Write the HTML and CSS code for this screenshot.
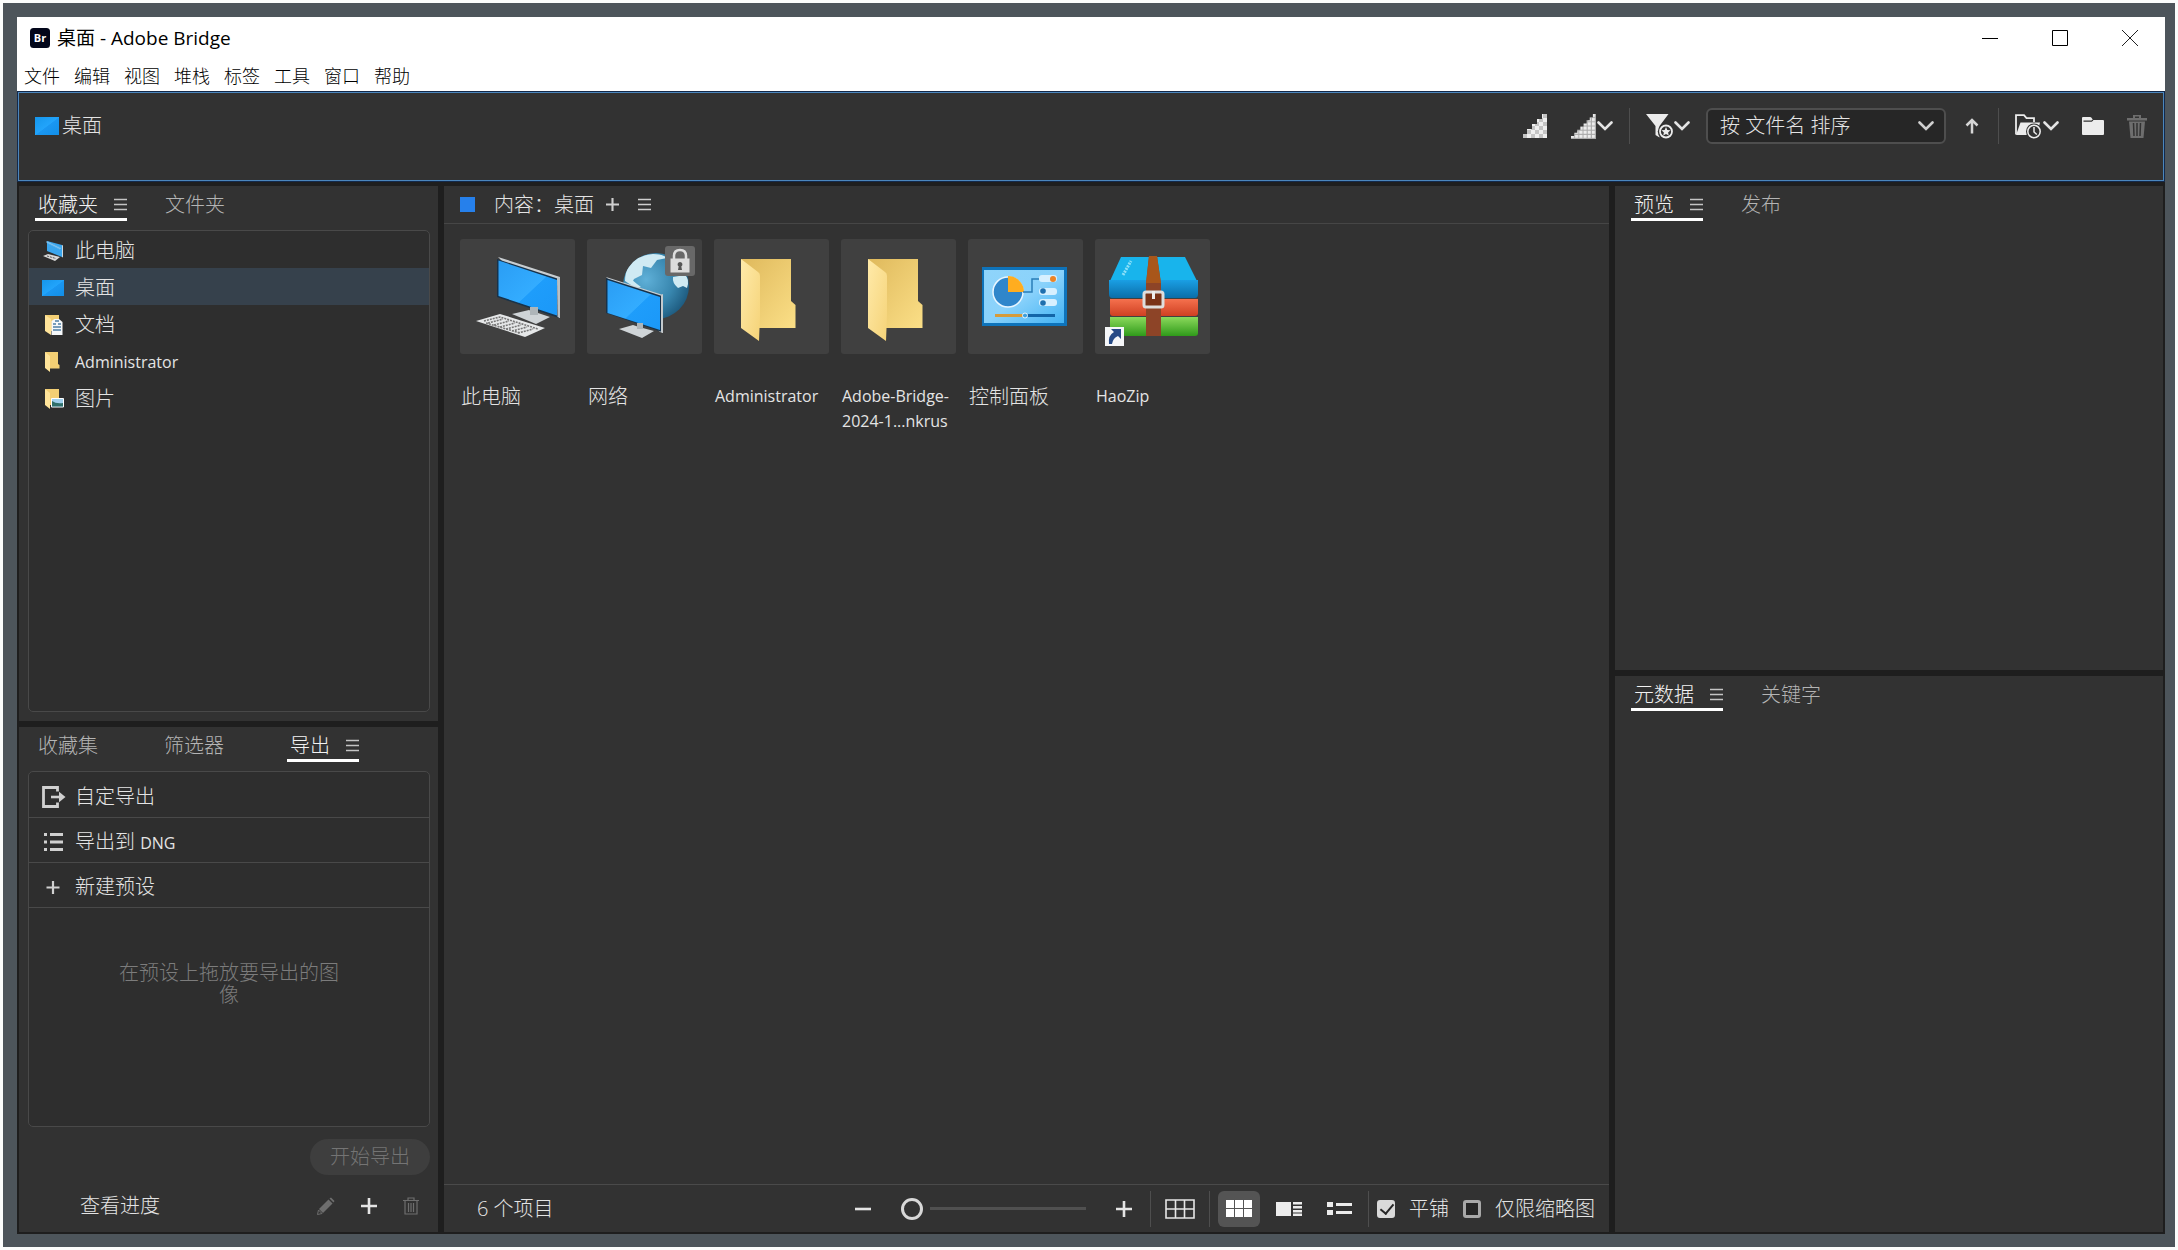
FILE: index.html
```html
<!DOCTYPE html>
<html lang="zh-CN">
<head>
<meta charset="utf-8">
<title>桌面 - Adobe Bridge</title>
<link rel="stylesheet" href="styles.css">
</head>
<body>
<svg class="defs" aria-hidden="true">
  <defs>
    <linearGradient id="g-screen" x1="0" y1="0" x2="1" y2="1"><stop offset="0" stop-color="#2a9df4"/><stop offset="0.55" stop-color="#33acff"/><stop offset="0.56" stop-color="#1e9dfb"/><stop offset="1" stop-color="#1b98f8"/></linearGradient>
    <linearGradient id="g-desk" x1="0" y1="0" x2="1" y2="1"><stop offset="0" stop-color="#1596ec"/><stop offset="0.5" stop-color="#22a4fb"/><stop offset="0.52" stop-color="#1a97f2"/><stop offset="1" stop-color="#128fe8"/></linearGradient>
    <linearGradient id="g-back" x1="0" y1="0" x2="1" y2="1"><stop offset="0" stop-color="#dfb95c"/><stop offset="1" stop-color="#fbdf87"/></linearGradient>
    <linearGradient id="g-flap" x1="0" y1="0" x2="1" y2="1"><stop offset="0" stop-color="#ffeaa9"/><stop offset="1" stop-color="#f5d378"/></linearGradient>
    <radialGradient id="g-globe" cx="0.35" cy="0.4" r="0.7"><stop offset="0" stop-color="#5fb0d8"/><stop offset="0.6" stop-color="#3886ae"/><stop offset="1" stop-color="#1c587c"/></radialGradient>
    <linearGradient id="g-panel" x1="0" y1="0" x2="1" y2="1"><stop offset="0" stop-color="#8fd4fa"/><stop offset="0.5" stop-color="#8ad2fb"/><stop offset="1" stop-color="#43b3f4"/></linearGradient>
    <linearGradient id="g-blue" x1="0" y1="0" x2="0" y2="1"><stop offset="0" stop-color="#1a9fe4"/><stop offset="1" stop-color="#0b6ea8"/></linearGradient>
    <linearGradient id="g-red" x1="0" y1="0" x2="0" y2="1"><stop offset="0" stop-color="#f5714e"/><stop offset="1" stop-color="#cf4022"/></linearGradient>
    <linearGradient id="g-green" x1="0" y1="0" x2="0" y2="1"><stop offset="0" stop-color="#8bd95c"/><stop offset="1" stop-color="#2f9a1a"/></linearGradient>
    <pattern id="p-check" width="8" height="8" patternUnits="userSpaceOnUse"><rect width="8" height="8" fill="#c4c4c4"/><path d="M0 0h4v4H0zM4 4h4v4H4z" fill="#efefef"/></pattern>
    <pattern id="p-check-fine" width="4" height="4" patternUnits="userSpaceOnUse"><rect width="4" height="4" fill="#a8a8a8"/><path d="M0 0h3v3H0z" fill="#ececec"/></pattern>
  </defs>
  <symbol id="i-desktop" viewBox="0 0 24 18"><path d="M0 0h24v18H0z" fill="url(#g-desk)"/></symbol>
  <symbol id="i-menu" viewBox="0 0 13 13"><path d="M0 1.500h13M0 6.500h13M0 11.500h13" stroke="currentColor" stroke-width="1.500"/></symbol>
  <symbol id="i-plus" viewBox="0 0 16 16"><path d="M8 0v16M0 8h16" stroke="currentColor" stroke-width="2.600"/></symbol>
  <symbol id="i-chevron" viewBox="0 0 16 10"><path d="M1.500 1.500L8 8l6.500-6.500" fill="none" stroke="currentColor" stroke-width="2.600" stroke-linecap="round"/></symbol>
  <symbol id="i-folder" viewBox="0 0 56 84"><path d="M1 1h50v42l4.500 4V70H17z" fill="url(#g-back)"/><path d="M1 1l17 13q2 1 2 4v40l-1 25L1 70z" fill="url(#g-flap)"/></symbol>
  <symbol id="i-trash" viewBox="0 0 20 23"><path d="M0 3h20v2.500H0zM6 0h8v3h-2V1.500H8V3H6z" fill="currentColor"/><path d="M2 6.500h16L16.500 23h-13z" fill="currentColor"/><path d="M6.500 8l.5 13M10 8v13M13.500 8L13 21" stroke="#323232" stroke-width="1.500"/></symbol>
</svg>

<div class="window">
  <header class="titlebar">
    <svg class="app-icon" viewBox="0 0 20 20"><rect width="20" height="20" rx="3.500" fill="#02061a"/><text x="10" y="13.500" text-anchor="middle" class="app-icon-text">Br</text></svg>
    <h1 class="title">桌面 - Adobe Bridge</h1>
    <div class="window-buttons">
      <button aria-label="最小化"><svg width="16" height="16"><path d="M0 8.500h16" stroke="#000"/></svg></button>
      <button aria-label="最大化"><svg width="16" height="16"><path d="M.5.5h15v15H.5z" fill="none" stroke="#000"/></svg></button>
      <button aria-label="关闭"><svg width="16" height="16"><path d="M0 0l16 16M16 0L0 16" stroke="#222"/></svg></button>
    </div>
  </header>
  <nav class="menubar">
    <button>文件</button><button>编辑</button><button>视图</button><button>堆栈</button><button>标签</button><button>工具</button><button>窗口</button><button>帮助</button>
  </nav>

  <section class="pathbar">
    <a class="crumb" href="#desktop"><svg width="24" height="18"><use href="#i-desktop"/></svg>桌面</a>
    <div class="tools">
      <button class="tool tool-first" aria-label="缩览图品质"><svg width="24" height="24" viewBox="0 0 24 24"><path d="M0 24v-4h4v-5h5v-5h5V5h5V0h5v24z" fill="url(#p-check)"/></svg></button>
      <button class="tool" aria-label="预览品质"><svg width="25" height="25" viewBox="0 0 24 24"><path d="M0 24v-3h3v-3h3v-3h3v-3h3V9h3V6h3V3h3V0h3v24z" fill="url(#p-check-fine)"/></svg><svg class="chev" width="16" height="10"><use href="#i-chevron"/></svg></button>
      <span class="divider"></span>
      <button class="tool" aria-label="过滤"><svg width="27" height="26" viewBox="0 0 27 26"><path d="M0 1h22.500L13.500 13v11.500l-4-2.500v-9z" fill="#ececec"/><circle cx="20" cy="18.500" r="8.200" fill="#323232"/><circle cx="20" cy="18.500" r="6" fill="#323232" stroke="#ececec" stroke-width="1.800"/><path d="M20 14l1.300 3 3.200.3-2.400 2.100.7 3.200-2.800-1.700-2.800 1.700.7-3.200-2.400-2.100 3.200-.3z" fill="#ececec"/></svg><svg class="chev" width="16" height="10"><use href="#i-chevron"/></svg></button>
      <div class="sort">
        <select aria-label="排序方式"><option>按 文件名 排序</option></select>
        <svg class="sort-chev" width="16" height="10"><use href="#i-chevron"/></svg>
      </div>
      <button class="tool tool-arrow" aria-label="升序"><svg width="16" height="16" viewBox="0 0 16 16"><path d="M8 15.500V3M2.500 7.500L8 2l5.500 5.500" fill="none" stroke="currentColor" stroke-width="2.500"/></svg></button>
      <span class="divider"></span>
      <button class="tool" aria-label="最近使用的文件夹"><svg width="27" height="25" viewBox="0 0 27 25"><path d="M1 20.500V1.200h8l2.500 3H19V8" fill="none" stroke="#ececec" stroke-width="1.800"/><path d="M1 21L5.500 8.500H25L22 21z" fill="#ececec"/><circle cx="19" cy="17.500" r="8" fill="#323232"/><circle cx="19" cy="17.500" r="6.200" fill="#323232" stroke="#ececec" stroke-width="1.500"/><path d="M19 13v5l2.800 2.500" fill="none" stroke="#ececec" stroke-width="1.500"/></svg><svg class="chev" width="16" height="10"><use href="#i-chevron"/></svg></button>
      <button class="tool tool-folder" aria-label="新建文件夹"><svg width="22" height="18" viewBox="0 0 22 18"><path d="M0 1q0-1 1-1h7q1 0 1.500.8L11 3h10q1 0 1 1v13q0 1-1 1H1q-1 0-1-1z" fill="#ececec"/><path d="M1.500 4.200h8L11 3" fill="none" stroke="#323232" stroke-width="1.200"/></svg></button>
      <button class="tool tool-off" aria-label="删除" disabled><svg width="20" height="23"><use href="#i-trash"/></svg></button>
    </div>
  </section>

  <main class="workspace">
    <div class="column column-left">
      <section class="panel">
        <div class="tabs">
          <button class="tab active">收藏夹<svg width="13" height="13"><use href="#i-menu"/></svg></button>
          <button class="tab">文件夹</button>
        </div>
        <ul class="box favorites">
          <li><a href="#pc"><svg width="22" height="22" viewBox="0 0 22 22"><path d="M5 1l15 4v12L5 11z" fill="#3aa6ee"/><path d="M20 5l1 .5V17l-1 .5z" fill="#cfd6da"/><path d="M5 1v2l2-1v2l2-1v2l2-1v2l2-1v2l2-1v2l2-1v2l2-1" fill="none" stroke="#8fc9ee" stroke-width=".8"/><path d="M1 16l5-2 12 3-5 4z" fill="#d9d9d9"/><path d="M5 16l9 2.500" stroke="#555" stroke-dasharray="2 1"/></svg>此电脑</a></li>
          <li class="selected"><a href="#desktop"><svg width="22" height="16" viewBox="0 0 24 18" preserveAspectRatio="none"><path d="M0 0h24v18H0z" fill="url(#g-desk)"/></svg>桌面</a></li>
          <li><a href="#docs"><svg width="22" height="22" viewBox="0 0 22 22"><path d="M3 1h14v16H7z" fill="#f3cf74"/><path d="M3 1l6 4v16l-6-4z" fill="#ffe49a"/><path d="M9.500 7l3-2H17l3.500 3v13h-11z" fill="#f5f8fa"/><path d="M13 7h4M11 10h3M16 10h3M11 13h8M11 16h8" stroke="#4d7fa6" stroke-width="1.300"/></svg>文档</a></li>
          <li><a href="#admin"><svg width="22" height="22" viewBox="0 0 22 22"><path d="M3 1h13v12l1.500 1v3.500H7z" fill="#f3cf74"/><path d="M3 1l5 4v16l-5-4z" fill="#ffe49a"/></svg><span class="latin">Administrator</span></a></li>
          <li><a href="#pics"><svg width="22" height="22" viewBox="0 0 22 22"><path d="M3 1h14v16H7z" fill="#f3cf74"/><path d="M3 1l5 4v16l-5-4z" fill="#ffe49a"/><path d="M9.500 10.500h12v8.500h-12z" fill="#9fd0ee" stroke="#fff"/><path d="M10 13q4 3 11 2v3.500H10z" fill="#2e6f6a"/></svg>图片</a></li>
        </ul>
      </section>
      <section class="panel">
        <div class="tabs">
          <button class="tab">收藏集</button>
          <button class="tab">筛选器</button>
          <button class="tab active">导出<svg width="13" height="13"><use href="#i-menu"/></svg></button>
        </div>
        <div class="box">
          <ul class="presets">
            <li><svg width="24" height="22" viewBox="0 0 24 22"><path d="M15.500 5.500V1.500H1.500v19h14v-4" fill="none" stroke="currentColor" stroke-width="2.800"/><path d="M9 11h9" stroke="currentColor" stroke-width="2.600"/><path d="M17 5.800L23.500 11 17 16.200z" fill="currentColor"/></svg>自定导出</li>
            <li><svg width="24" height="22" viewBox="0 0 24 22"><path d="M2 3.500h3M2 11h3M2 18.500h3M8 3.500h13M8 11h13M8 18.500h13" stroke="currentColor" stroke-width="2.800"/></svg><span>导出到 <span class="latin">DNG</span></span></li>
            <li><svg width="24" height="22" viewBox="0 0 24 22"><path d="M11 5v13M4.500 11.500h13" stroke="currentColor" stroke-width="2.200"/></svg>新建预设</li>
          </ul>
          <p class="hint">在预设上拖放要导出的图像</p>
        </div>
        <button class="start" disabled>开始导出</button>
        <div class="progress">
          <a href="#progress">查看进度</a>
          <button class="tool-off" aria-label="编辑" disabled><svg width="18" height="18" viewBox="0 0 18 18"><path d="M2 12L11.500 2.500l4 4L6 16z" fill="currentColor"/><path d="M12.500 1.500L14 .5l3.500 3.500-1 1.500z" fill="currentColor"/><path d="M1.500 13l3.500 3.500-4.500 1z" fill="none" stroke="currentColor"/></svg></button>
          <button aria-label="添加"><svg width="16" height="16"><use href="#i-plus"/></svg></button>
          <button class="tool-off" aria-label="删除" disabled><svg width="16" height="18" viewBox="0 0 16 18"><path d="M0 3.500h16M5 3.500V1h6v2.500M2 3.500V17h12V3.500M5.500 6v9M8 6v9M10.500 6v9" fill="none" stroke="currentColor" stroke-width="1.200"/></svg></button>
        </div>
      </section>
    </div>

    <section class="panel content">
      <div class="content-head">
        <span class="marker"></span>
        <h2>内容：桌面</h2>
        <button aria-label="添加"><svg width="13" height="13"><use href="#i-plus"/></svg></button>
        <button aria-label="菜单"><svg width="13" height="13"><use href="#i-menu"/></svg></button>
      </div>
      <ul class="grid">
        <li>
          <div class="thumb"><svg width="115" height="115" viewBox="0 0 115 115">
            <path d="M38 18l62 20v41l-2-1z" fill="#c9ced1"/><path d="M37 20l62 20v39L37 58z" fill="#17324a"/><path d="M38.500 21.500L97 41v35.500L38.500 57z" fill="url(#g-screen)"/><path d="M97 39l3-1v41l-2.500-1z" fill="#b9c0c4"/>
            <path d="M52 75l17-4 4 2 5 1 12 4-14 7z" fill="#cfd4d7"/><path d="M70 68h8v8h-8z" fill="#aeb5b9"/>
            <path d="M16 82l24-7 45 14-20 9z" fill="#e6e8e9"/><path d="M24 82l16-4 38 12M28 84l15-4M34 86l15-4M40 88l15-4M46 90l15-4M52 92l15-4M58 94l15-4M26 84l34 10" fill="none" stroke="#777" stroke-width="1.600" stroke-dasharray="2 1"/></svg></div>
          <p>此电脑</p>
        </li>
        <li>
          <div class="thumb"><svg width="115" height="115" viewBox="0 0 115 115">
            <circle cx="69" cy="47" r="33" fill="url(#g-globe)"/><path d="M42 28q8-12 24-13 10 0 14 4l-10 2-6 8-8-2-1 9-8 4-3 6-6-4q0-9 4-14zM86 38l12-2q5 4 2 13l-4-2-5 2q-6-5-5-11zM40 42l4-2 6 5 4 3-6 2z" fill="#cfeaf3"/>
            <path d="M19 38l57 18v38l-3-1z" fill="#c9ced1"/><path d="M19 39l56 18v36L19 74z" fill="#17324a"/><path d="M20.500 41L73 58v33L20.500 74z" fill="url(#g-screen)"/><path d="M74 56l2-1v39l-2-1z" fill="#c4cacd"/>
            <path d="M32 90l14-4 6 2 15 4-12 7z" fill="#cfd4d7"/><path d="M50 84h6v6h-6z" fill="#aeb5b9"/></svg>
            <span class="lock"><svg width="30" height="30" viewBox="0 0 30 30"><path d="M9 13V10q0-6 6-6t6 6v3" fill="none" stroke="#dedede" stroke-width="2.500"/><path d="M5.500 12.500h19v14h-19z" fill="#dcdcdc"/><path d="M15 16a2.500 2.500 0 0 1 1.300 4.600L17 24h-4l.7-3.400A2.500 2.500 0 0 1 15 16z" fill="#555"/></svg></span></div>
          <p>网络</p>
        </li>
        <li>
          <div class="thumb folder"><svg width="56" height="84"><use href="#i-folder"/></svg></div>
          <p class="latin">Administrator</p>
        </li>
        <li>
          <div class="thumb folder"><svg width="56" height="84"><use href="#i-folder"/></svg></div>
          <p class="latin">Adobe-Bridge-<br>2024-1...nkrus</p>
        </li>
        <li>
          <div class="thumb"><svg width="115" height="115" viewBox="0 0 115 115">
            <path d="M14 28h85v59H14z" fill="#0e73ba"/><path d="M16 31h80v53H16z" fill="url(#g-panel)"/>
            <circle cx="40" cy="53" r="15" fill="#2f86cb" stroke="#e8f6ff" stroke-width="1.500"/><path d="M40 53V37a16 16 0 0 1 16 16z" fill="#ffad1f"/>
            <path d="M55 53h9V40h8" fill="none" stroke="#2a7db8" stroke-width="1.500"/>
            <rect x="71" y="36" width="18" height="7" rx="3" fill="#d7f0ff"/><circle cx="85" cy="40" r="3" fill="#ec8426"/><rect x="71" y="49" width="18" height="7" rx="3" fill="#d7f0ff"/><circle cx="75" cy="52" r="2.800" fill="#1f6fae"/><rect x="71" y="60" width="18" height="7" rx="3" fill="#d7f0ff"/><circle cx="75" cy="64" r="2.800" fill="#1f6fae"/>
            <path d="M27 76.500h28" stroke="#d69b3b" stroke-width="3"/><path d="M59 76.500h28" stroke="#1365a8" stroke-width="3"/><circle cx="57" cy="76.500" r="2.500" fill="#3ba0df" stroke="#e8f6ff"/></svg></div>
          <p>控制面板</p>
        </li>
        <li>
          <div class="thumb"><svg width="115" height="115" viewBox="0 0 115 115">
            <path d="M26 18h64l12 24H15z" fill="#18b4ec"/><path d="M14 41h89v14q0 4-3 4H17q-3 0-3-4z" fill="url(#g-blue)"/><path d="M15 60h88v14q0 3-3 3H18q-3 0-3-3z" fill="url(#g-red)"/><path d="M15 78h88v16q0 3-3 3H18q-3 0-3-3z" fill="url(#g-green)"/>
            <path d="M54 17h8l4 28v52H51V45z" fill="#8d4427"/><path d="M54 17h8l4 27H51z" fill="#a8561a"/>
            <rect x="49" y="53" width="19" height="15" rx="2" fill="#7a3419" stroke="#dedede" stroke-width="3"/><path d="M58.500 52v8" stroke="#eee" stroke-width="3"/>
            <path d="M28 36l8-14" stroke="#8be0f8" stroke-width="3" stroke-dasharray="2 1"/>
            <path d="M10 88h19v19H10z" fill="#f5f6f8"/><path d="M14 105q-1-9 5-12l-3-3h10v10l-3-3q-5 2-6 8z" fill="#274a86"/></svg></div>
          <p class="latin">HaoZip</p>
        </li>
      </ul>
      <footer class="status">
        <span class="count">6 个项目</span>
        <div class="zoom">
          <button aria-label="缩小"><svg width="16" height="16"><path d="M0 8h16" stroke="currentColor" stroke-width="2.600"/></svg></button>
          <input type="range" min="0" max="100" value="0" aria-label="缩览图大小">
          <button aria-label="放大"><svg width="16" height="16"><use href="#i-plus"/></svg></button>
        </div>
        <div class="group">
          <button class="view" aria-label="锁定网格"><svg width="30" height="20" viewBox="0 0 30 20"><path d="M1 1h28v18H1zM10.500 1v18M19.500 1v18M1 10h28" fill="none" stroke="#e6e6e6" stroke-width="1.600"/></svg></button>
        </div>
        <div class="group views">
          <button class="view on" aria-label="缩览图"><svg width="26" height="17" viewBox="0 0 26 17"><path d="M0 0h8v8H0zM9 0h8v8H9zM18 0h8v8h-8zM0 9h8v8H0zM9 9h8v8H9zM18 9h8v8h-8z" fill="#fff"/></svg></button>
          <button class="view" aria-label="详细信息"><svg width="26" height="15" viewBox="0 0 26 15"><path d="M0 1h15v14H0zM17 1h9v2.500h-9zM17 5h9v2.500h-9zM17 9h9v2.500h-9zM17 12.500h9V15h-9z" fill="#ececec"/></svg></button>
          <button class="view" aria-label="列表"><svg width="25" height="15" viewBox="0 0 25 15"><path d="M0 1h6v5H0zM0 9h6v5H0zM9 2h16v3H9zM9 10h16v3H9z" fill="#ececec"/></svg></button>
        </div>
        <div class="group checks">
          <label><input type="checkbox" checked>平铺</label>
          <label><input type="checkbox">仅限缩略图</label>
        </div>
      </footer>
    </section>

    <div class="column column-right">
      <section class="panel">
        <div class="tabs">
          <button class="tab active">预览<svg width="13" height="13"><use href="#i-menu"/></svg></button>
          <button class="tab">发布</button>
        </div>
      </section>
      <section class="panel">
        <div class="tabs">
          <button class="tab active">元数据<svg width="13" height="13"><use href="#i-menu"/></svg></button>
          <button class="tab">关键字</button>
        </div>
      </section>
    </div>
  </main>
</div>
</body>
</html>
```
FILE: styles.css
```css
* {
  box-sizing: border-box;
}

body {
  display: flex;
  min-height: 100vh;
  margin: 0;
  padding: 14px 10px 13px 14px;
  border: 3px solid #fbfdfc;
  background: #4d555b;
  color: #e4e4e4;
  font: 20px/24px "Open Sans", "Noto Sans CJK SC", sans-serif;
  font-weight: 300;
}

h1,
h2,
p,
ul {
  margin: 0;
  padding: 0;
  font-size: inherit;
  font-weight: inherit;
  list-style: none;
}

button {
  padding: 0;
  border: 0;
  background: none;
  color: inherit;
  font: inherit;
}

a {
  color: inherit;
  text-decoration: none;
}

svg {
  display: block;
  flex: none;
}

.defs {
  position: absolute;
  width: 0;
  height: 0;
}

.latin {
  font-size: 16px;
  font-weight: 400;
}

.window {
  display: flex;
  flex: 1;
  flex-direction: column;
  min-width: 0;
  background: #1e1e1e;
}

/* Title bar and menus */
.titlebar {
  display: flex;
  align-items: center;
  height: 42px;
  padding-left: 13px;
  background: #fff;
  color: #000;
}

.app-icon {
  width: 20px;
  height: 20px;
}

.app-icon-text {
  fill: #fff;
  font-size: 11px;
  font-weight: 700;
}

.title {
  flex: 1;
  margin-left: 7px;
  font-size: 19px;
  font-weight: 400;
}

.window-buttons {
  display: flex;
}

.window-buttons button {
  display: flex;
  align-items: center;
  justify-content: center;
  width: 70px;
  height: 42px;
}

.menubar {
  display: flex;
  gap: 14px;
  height: 32px;
  padding: 5px 7px 3px;
  background: #fff;
  color: #000;
  font-size: 18px;
}

/* Path bar */
.pathbar {
  display: flex;
  align-items: flex-start;
  justify-content: space-between;
  height: 89px;
  margin: 1px 1px 5px;
  padding: 15px 16px 0;
  border: 1px solid #4b86bd;
  outline: 1px solid #13294a;
  background: #323232;
}

.crumb {
  display: flex;
  gap: 3px;
  align-items: center;
  height: 36px;
}

.tools {
  display: flex;
  gap: 16px;
  align-items: center;
  height: 36px;
}

.tool {
  display: flex;
  align-items: center;
}

.tool-first {
  margin-right: 8px;
}

.tool-arrow {
  margin: 0 2px;
  color: #d6d6d6;
}

.tool-folder {
  margin: 0 7px;
}

.tool-off {
  color: #6e6e6e;
}

.chev {
  margin-left: 1px;
}

.divider {
  width: 1px;
  height: 36px;
  background: #4e4e4e;
}

.sort {
  position: relative;
  width: 240px;
}

.sort select {
  width: 100%;
  height: 36px;
  padding: 0 40px 0 12px;
  border: 2px solid #4e4e4e;
  border-radius: 6px;
  background: #262626;
  color: inherit;
  font: inherit;
  appearance: none;
}

.sort-chev {
  position: absolute;
  top: 13px;
  right: 12px;
  color: #cfcfcf;
  pointer-events: none;
}

/* Workspace */
.workspace {
  display: grid;
  flex: 1;
  grid-template-columns: 419fr 1165fr 548fr;
  gap: 6px;
  padding: 0 2px 2px;
}

.column {
  display: grid;
  gap: 6px;
  min-width: 0;
}

.column-left {
  grid-template-rows: 535fr 505fr;
}

.column-right {
  grid-template-rows: 484fr 556fr;
}

.panel {
  display: flex;
  flex-direction: column;
  min-width: 0;
  background: #323232;
}

.tabs {
  display: flex;
  flex: none;
  gap: 35px;
  height: 44px;
  padding: 4px 16px 0;
}

.tab {
  display: flex;
  gap: 16px;
  align-items: center;
  height: 31px;
  padding: 1px 0 0 3px;
  border-bottom: 3px solid transparent;
  color: #b4b4b4;
}

.tab:not(.active):not(:last-child) {
  padding-right: 28px;
}

.tab.active {
  border-color: #fff;
  color: #f2f2f2;
}

.tab svg {
  color: #c4c4c4;
}

.box {
  flex: 1;
  margin: 0 8px 9px 9px;
  border: 1px solid #494949;
  border-radius: 5px;
  background: #2e2e2e;
}

.favorites a {
  display: flex;
  gap: 11px;
  align-items: center;
  height: 37px;
  padding: 3px 0 0 13px;
}

.favorites .selected {
  background: #36414c;
}

.presets li {
  display: flex;
  gap: 9px;
  align-items: center;
  height: 45px;
  padding: 4px 0 0 13px;
  border-bottom: 1px solid #494949;
}

.presets li:first-child {
  height: 46px;
}

.presets svg {
  color: #d0d0d0;
}

.hint {
  width: 220px;
  margin: 54px auto 0;
  color: #7c7c7c;
  line-height: 22px;
  text-align: center;
}

.start {
  align-self: flex-end;
  width: 120px;
  height: 36px;
  margin: 3px 8px 0;
  border-radius: 18px;
  background: #3e3e3e;
  color: #747474;
}

.progress {
  display: flex;
  gap: 26px;
  align-items: center;
  height: 57px;
  padding: 5px 19px 0 61px;
}

.progress a {
  flex: 1;
}

/* Content panel */
.content-head {
  display: flex;
  gap: 19px;
  align-items: center;
  height: 38px;
  padding-left: 16px;
  border-bottom: 1px solid #464646;
}

.content-head button {
  color: #cfcfcf;
}

.content-head h2 {
  margin-right: -7px;
}

.marker {
  width: 15px;
  height: 15px;
  background: #2680eb;
}

.grid {
  display: grid;
  flex: 1;
  grid-template-columns: repeat(auto-fill, 115px);
  gap: 12px;
  align-content: start;
  padding: 15px 16px;
}

.grid p {
  padding: 30px 0 0 1px;
  line-height: 25px;
  white-space: nowrap;
}

.thumb {
  position: relative;
  display: flex;
  align-items: center;
  justify-content: center;
  height: 115px;
  border-radius: 3px;
  background: #404040;
}

.thumb.folder {
  padding: 6px 8px 0 0;
}

.lock {
  position: absolute;
  top: 7px;
  right: 7px;
  border-radius: 3px;
  background: #686868;
}

.status {
  display: flex;
  align-items: center;
  height: 48px;
  border-top: 1px solid #4a4a4a;
}

.count {
  flex: 1;
  padding-left: 33px;
}

.zoom {
  display: flex;
  gap: 30px;
  align-items: center;
  margin-right: 18px;
}

.zoom input {
  width: 185px;
  height: 22px;
  margin: 0;
  background: linear-gradient(#505050, #505050) right / 156px 3px no-repeat;
  appearance: none;
}

.zoom input::-webkit-slider-thumb {
  width: 22px;
  height: 22px;
  border: 3px solid #d8d8d8;
  border-radius: 50%;
  background: #323232;
  appearance: none;
}

.group {
  display: flex;
  align-items: center;
  height: 36px;
  padding: 0 8px;
  border-left: 1px solid #4e4e4e;
}

.view {
  display: flex;
  align-items: center;
  justify-content: center;
  width: 42px;
  height: 36px;
  border-radius: 6px;
}

.view.on {
  background: #545454;
}

.views {
  gap: 8px;
}

.checks {
  gap: 14px;
  padding-right: 14px;
}

.checks label {
  display: flex;
  gap: 14px;
  align-items: center;
}

.checks input {
  width: 18px;
  height: 18px;
  margin: 0;
  border: 3px solid #a8a8a8;
  border-radius: 3px;
  background: #262626;
  appearance: none;
}

.checks input:checked {
  border-color: #dadada;
  background: #dadada;
}

.checks input:checked::before {
  display: block;
  width: 6px;
  height: 11px;
  margin: -2px 0 0 3px;
  border: solid #262626;
  border-width: 0 2px 2px 0;
  content: "";
  transform: rotate(40deg);
}
```
